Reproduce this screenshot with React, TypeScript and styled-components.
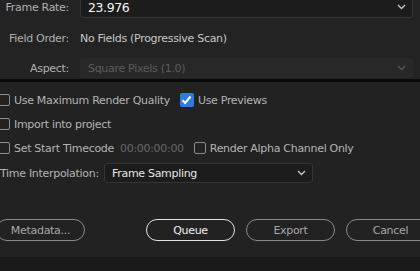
import * as React from 'react';
import styled, { createGlobalStyle } from 'styled-components';

const GlobalStyle = createGlobalStyle`
  html, body {
    margin: 0;
    padding: 0;
    background: #222222;
  }
  * { box-sizing: border-box; }
`;

const Window = styled.div`
  width: 420px;
  height: 271px;
  overflow: hidden;
  display: flex;
  flex-direction: column;
  background: #222222;
  font-family: 'DejaVu Sans', 'Liberation Sans', sans-serif;
  font-size: 11px;
  letter-spacing: -0.3px;
  color: #b4b4b4;
`;

const TopPanel = styled.section`
  display: flex;
  flex-direction: column;
  gap: 10px;
  padding: 0 7px 1px 0;
  background: #232323;
`;

const FieldRow = styled.div<{ $offset?: number }>`
  display: grid;
  grid-template-columns: 69px 1fr;
  column-gap: 11px;
  align-items: center;
  height: ${({ $offset }) => ($offset ? 22 : 20)}px;
  margin-top: ${({ $offset }) => ($offset ? -$offset : 0)}px;
`;

const FieldLabel = styled.span`
  text-align: right;
  white-space: nowrap;
  color: #b0b0b0;
`;

const FieldValue = styled.span`
  color: #c8c8c8;
  white-space: nowrap;
`;

const Select = styled.div<{ $disabled?: boolean; $width?: number }>`
  display: flex;
  align-items: center;
  justify-content: space-between;
  height: 100%;
  width: ${({ $width }) => ($width ? `${$width}px` : '100%')};
  padding: 0 6px 0 7px;
  border-radius: 3px;
  background: ${({ $disabled }) => ($disabled ? '#282828' : '#1c1c1c')};
  border: 1px solid ${({ $disabled }) => ($disabled ? '#282828' : '#353535')};
  color: ${({ $disabled }) => ($disabled ? '#5c5c5c' : '#e6e6e6')};
  white-space: nowrap;
`;

const SelectText = styled.span<{ $large?: boolean }>`
  font-size: ${({ $large }) => ($large ? '12.5px' : 'inherit')};
  letter-spacing: ${({ $large }) => ($large ? '-0.4px' : 'inherit')};
  color: ${({ $large }) => ($large ? '#f4f4f4' : 'inherit')};
`;

const Separator = styled.div`
  height: 3px;
  background: #0a0a0a;
`;

const LowerPanel = styled.section`
  flex: 1;
  display: flex;
  flex-direction: column;
  padding-top: 8px;
  background: #222222;
`;

const OptionRow = styled.div<{ $gap?: number }>`
  display: flex;
  align-items: center;
  height: 20px;
  margin-bottom: ${({ $gap }) => $gap ?? 4}px;
  white-space: nowrap;
`;

const Option = styled.label<{ $left?: number }>`
  display: flex;
  align-items: center;
  gap: 4px;
  margin-left: ${({ $left }) => $left ?? 0}px;
  color: #b4b4b4;
`;

const Box = styled.span<{ $checked?: boolean }>`
  display: inline-flex;
  align-items: center;
  justify-content: center;
  width: ${({ $checked }) => ($checked ? 14 : 12)}px;
  height: ${({ $checked }) => ($checked ? 14 : 12)}px;
  border-radius: 2px;
  background: ${({ $checked }) => ($checked ? '#2d7de0' : 'transparent')};
  border: ${({ $checked }) => ($checked ? 'none' : '1.5px solid #8c8c8c')};
`;

const Timecode = styled.span`
  margin-left: 6px;
  color: #686868;
`;

const InterpLabel = styled.span`
  width: 97px;
  margin-right: 7px;
  color: #b4b4b4;
`;

const ButtonBar = styled.div`
  display: flex;
  justify-content: space-between;
  margin: 36px -15px 0 -4px;
  height: 22px;
`;

const ButtonGroup = styled.div`
  display: flex;
  gap: 11px;
`;

const PillButton = styled.button<{ $primary?: boolean }>`
  width: 89px;
  height: 22px;
  border-radius: 11px;
  background: transparent;
  border: 1.5px solid ${({ $primary }) => ($primary ? '#e2e2e2' : '#8a8a8a')};
  color: ${({ $primary }) => ($primary ? '#f2f2f2' : '#a8a8a8')};
  font-family: inherit;
  font-size: 11px;
  letter-spacing: -0.3px;
  padding: 0;
`;

const BottomStrip = styled.div`
  margin-top: auto;
  height: 14px;
  background: #1a1a1a;
`;

const Chevron: React.FC<{ dim?: boolean }> = ({ dim }) => (
  <svg width="9" height="6" viewBox="0 0 9 6">
    <path d="M1 1 L4.5 4.5 L8 1" fill="none" stroke={dim ? '#555' : '#c4c4c4'} strokeWidth="1.4" />
  </svg>
);

const Check: React.FC<{ checked?: boolean }> = ({ checked }) => (
  <Box $checked={checked}>
    {checked && (
      <svg width="11" height="10" viewBox="0 0 11 10">
        <path d="M1.5 5.2 L4.2 8 L9.5 1.5" fill="none" stroke="#ffffff" strokeWidth="2" />
      </svg>
    )}
  </Box>
);

export default function App() {
  return (
    <>
      <GlobalStyle />
      <Window>
        <TopPanel>
          <FieldRow $offset={4}>
            <FieldLabel>Frame Rate:</FieldLabel>
            <Select>
              <SelectText $large>23.976</SelectText>
              <Chevron />
            </Select>
          </FieldRow>
          <FieldRow>
            <FieldLabel>Field Order:</FieldLabel>
            <FieldValue>No Fields (Progressive Scan)</FieldValue>
          </FieldRow>
          <FieldRow>
            <FieldLabel>Aspect:</FieldLabel>
            <Select $disabled>
              <SelectText>Square Pixels (1.0)</SelectText>
              <Chevron dim />
            </Select>
          </FieldRow>
        </TopPanel>
        <Separator />
        <LowerPanel>
          <OptionRow>
            <Option $left={-2}>
              <Check />
              Use Maximum Render Quality
            </Option>
            <Option $left={10}>
              <Check checked />
              Use Previews
            </Option>
          </OptionRow>
          <OptionRow>
            <Option $left={-2}>
              <Check />
              Import into project
            </Option>
          </OptionRow>
          <OptionRow $gap={5}>
            <Option $left={-2}>
              <Check />
              Set Start Timecode
            </Option>
            <Timecode>00:00:00:00</Timecode>
            <Option $left={10}>
              <Check />
              Render Alpha Channel Only
            </Option>
          </OptionRow>
          <OptionRow $gap={0}>
            <InterpLabel>Time Interpolation:</InterpLabel>
            <Select $width={209}>
              <SelectText>Frame Sampling</SelectText>
              <Chevron />
            </Select>
          </OptionRow>
          <ButtonBar>
            <PillButton>Metadata...</PillButton>
            <ButtonGroup>
              <PillButton $primary>Queue</PillButton>
              <PillButton>Export</PillButton>
              <PillButton>Cancel</PillButton>
            </ButtonGroup>
          </ButtonBar>
          <BottomStrip />
        </LowerPanel>
      </Window>
    </>
  );
}
